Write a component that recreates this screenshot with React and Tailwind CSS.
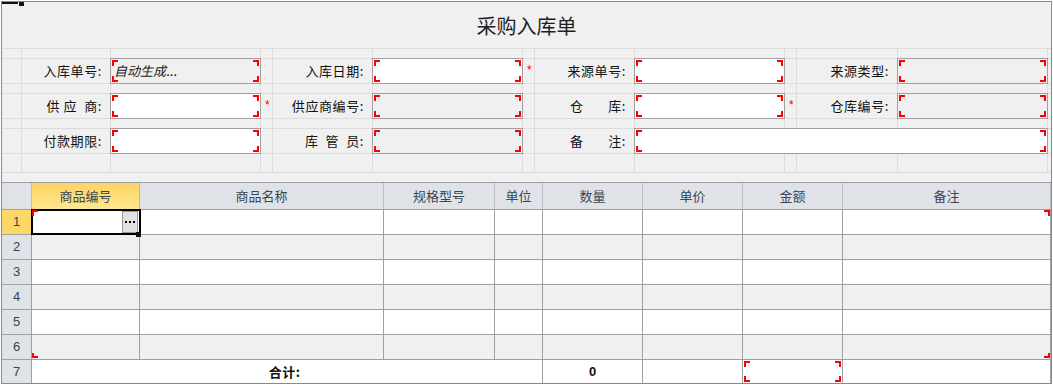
import React from 'react';

// red corner marks used on required / bound fields
function Brackets() {
    return (
        <>
            <span className="absolute left-px top-px h-[6px] w-[6px] border-l-2 border-t-2 border-[#ff0000]" />
            <span className="absolute right-px top-px h-[6px] w-[6px] border-r-2 border-t-2 border-[#ff0000]" />
            <span className="absolute bottom-px left-px h-[6px] w-[6px] border-b-2 border-l-2 border-[#ff0000]" />
            <span className="absolute bottom-px right-px h-[6px] w-[6px] border-b-2 border-r-2 border-[#ff0000]" />
        </>
    );
}

function Field({ readOnly, text, wide }) {
    return (
        <div
            className={`relative -m-px flex items-center border border-[#a0a0a0] pl-[3px] ${readOnly ? 'bg-[#f0f0f0]' : 'bg-white'} ${wide ? 'col-span-4' : ''}`}
        >
            <Brackets />
            {text && <span className="text-[13px] italic text-[#222]">{text}</span>}
        </div>
    );
}

function Label({ children }) {
    return (
        <div className="flex items-center justify-end whitespace-pre bg-[#f0f0f0] pr-[8px] text-[13px] tracking-[0.6px] text-[#111]">
            {children}
        </div>
    );
}

function Star() {
    return (
        <div className="flex items-center bg-[#f0f0f0] pl-[4px]">
            <span className="-mt-[3px] font-['Liberation_Sans',sans-serif] text-[12px] leading-none text-[#ff0000]">*</span>
        </div>
    );
}

function Blank() {
    return <div className="bg-[#f0f0f0]" />;
}

function Spacer() {
    return Array.from({ length: 13 }).map((_, i) => <Blank key={i} />);
}

function FormArea() {
    return (
        <div className="grid grid-cols-[19px_88px_149px_11px_99px_149px_11px_99px_149px_11px_100px_149px_3px] grid-rows-[9px_24px_9px_24px_9px_24px_18px] gap-px border-y border-[#dcdcdc] bg-[#dcdcdc]">
            <Spacer />

            <Blank />
            <Label>入库单号:</Label>
            <Field readOnly text="自动生成..." />
            <Blank />
            <Label>入库日期:</Label>
            <Field />
            <Star />
            <Label>来源单号:</Label>
            <Field />
            <Blank />
            <Label>来源类型:</Label>
            <Field readOnly />
            <Blank />

            <Spacer />

            <Blank />
            <Label>{'供 应  商:'}</Label>
            <Field />
            <Star />
            <Label>供应商编号:</Label>
            <Field readOnly />
            <Blank />
            <Label>{'仓       库:'}</Label>
            <Field />
            <Star />
            <Label>仓库编号:</Label>
            <Field readOnly />
            <Blank />

            <Spacer />

            <Blank />
            <Label>付款期限:</Label>
            <Field />
            <Blank />
            <Label>{'库  管  员:'}</Label>
            <Field readOnly />
            <Blank />
            <Label>{'备       注:'}</Label>
            <Field wide />
            <Blank />

            <Spacer />
        </div>
    );
}

const headers = ['商品名称', '规格型号', '单位', '数量', '单价', '金额', '备注'];

function RowHead({ n, active }) {
    return (
        <div
            className={`flex h-[25px] items-center justify-center border-b border-r border-[#a0a0a0] font-['Liberation_Sans',sans-serif] text-[13px] text-[#3a4250] ${active ? 'bg-[#fdd868]' : 'bg-[#dfe3e8]'}`}
        >
            {n}
        </div>
    );
}

function DataGrid() {
    const rows = [1, 2, 3, 4, 5, 6];
    return (
        <div className="relative grid grid-cols-[30px_108px_244px_111px_48px_100px_100px_100px_208px]">
            {/* header */}
            <div className="h-[27px] border-b border-r border-b-[#a0a0a0] border-r-[#b8bdc4] bg-[#dfe3e8]" />
            <div className="flex h-[27px] items-center justify-center border-b border-r border-b-[#a0a0a0] border-r-[#c9b27a] bg-gradient-to-b from-[#fcd466] to-[#ffe58b] text-[13px] text-[#3b4653]">
                商品编号
            </div>
            {headers.map((h) => (
                <div
                    key={h}
                    className="flex h-[27px] items-center justify-center border-b border-r border-b-[#a0a0a0] border-r-[#b8bdc4] bg-[#dfe3e8] text-[13px] text-[#3b4653]"
                >
                    {h}
                </div>
            ))}

            {/* rows 1-6 */}
            {rows.map((n) => (
                <React.Fragment key={n}>
                    <RowHead n={n} active={n === 1} />
                    {Array.from({ length: 8 }).map((_, i) => (
                        <div
                            key={i}
                            className={`h-[25px] border-b border-r border-[#a0a0a0] ${n % 2 === 0 ? 'bg-[#f0f0f0]' : 'bg-white'}`}
                        />
                    ))}
                </React.Fragment>
            ))}

            {/* totals */}
            <div className="flex h-[23px] items-center justify-center border-r border-[#a0a0a0] bg-[#dfe3e8] font-['Liberation_Sans',sans-serif] text-[13px] text-[#3a4250]">
                7
            </div>
            <div className="col-span-4 flex h-[23px] items-center justify-center border-r border-[#a0a0a0] bg-white pr-[5px] text-[13px] font-bold tracking-[0.5px] text-[#111]">
                合计:
            </div>
            <div className="flex h-[23px] items-center justify-center border-r border-[#a0a0a0] bg-white font-['Liberation_Sans',sans-serif] text-[13px] font-bold text-[#111]">
                0
            </div>
            <div className="h-[23px] border-r border-[#a0a0a0] bg-white" />
            <div className="relative h-[23px] border-r border-[#a0a0a0] bg-white">
                <Brackets />
            </div>
            <div className="h-[23px] border-r border-[#a0a0a0] bg-white" />

            {/* current cell */}
            <div className="absolute left-[29px] top-[26px] h-[26px] w-[110px] border-2 border-black" />
            <div className="absolute left-[120px] top-[28px] flex h-[22px] w-[16px] items-center justify-center gap-[2px] border border-[#9a9a9a] bg-[#e1e1e1]">
                <span className="h-[2px] w-[2px] bg-black" />
                <span className="h-[2px] w-[2px] bg-black" />
                <span className="h-[2px] w-[2px] bg-black" />
            </div>
            <div className="absolute left-[134px] top-[49px] h-[5px] w-[5px] bg-[#111]" />

            {/* range marks */}
            <span className="absolute left-[30px] top-[27px] h-[6px] w-[6px] border-l-2 border-t-2 border-[#ff0000]" />
            <span className="absolute left-[1042px] top-[27px] h-[6px] w-[6px] border-r-2 border-t-2 border-[#ff0000]" />
            <span className="absolute left-[30px] top-[170px] h-[5px] w-[6px] border-b-2 border-l-2 border-[#ff0000]" />
            <span className="absolute left-[1042px] top-[170px] h-[5px] w-[6px] border-b-2 border-r-2 border-[#ff0000]" />
        </div>
    );
}

export default function App() {
    return (
        <div className="h-[385px] w-[1053px] bg-white font-['Noto_Sans_CJK_SC','Noto_Sans',sans-serif]">
            <div className="relative ml-px mt-px h-[383px] w-[1051px] overflow-hidden border border-[#8a8a8a] bg-[#f0f0f0]">
                <span className="absolute left-0 top-0 h-[2px] w-[16px] bg-[#111]" />
                <span className="absolute left-[17px] top-0 h-[4px] w-[5px] bg-[#111]" />

                <div className="flex h-[46px] items-center justify-center pt-[2px] text-[20px] text-[#1f1f1f]">
                    采购入库单
                </div>

                <FormArea />

                <div className="h-[9px]" />
                <div className="h-px bg-[#a0a0a0]" />

                <DataGrid />
            </div>
        </div>
    );
}
